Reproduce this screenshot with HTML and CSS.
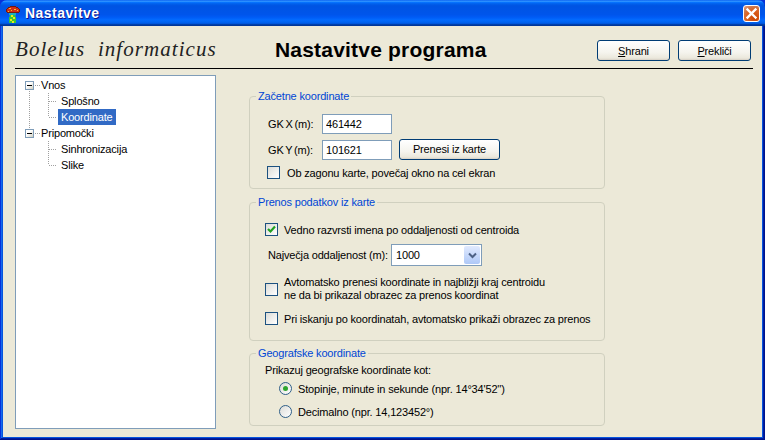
FILE: index.html
```html
<!DOCTYPE html>
<html lang="sl">
<head>
<meta charset="utf-8">
<title>Nastavitve</title>
<link rel="stylesheet" href="styles.css">
</head>
<body>
<div class="window">
  <div class="titlebar">
    <svg class="app-icon" width="15" height="17" viewBox="0 0 15 17" shape-rendering="crispEdges">
      <path fill="#6e1a10" d="M4 0h6v1h2v1h1v1h1v3h-1v1H1V6H0V3h1V2h1V1h2z"/>
      <path fill="#d02c1a" d="M4 1h6v1h2v1h1v3H1V3h1V2h2z"/>
      <path fill="#f4c020" d="M3 2h2v1H3zM8 3h2v1H8zM5 4h1v1H5zM11 4h1v1h-1zM2 5h1v1H2z"/>
      <path fill="#18b0c0" d="M3 7h7v2H3z"/>
      <path fill="#38c838" d="M3 9h7v8H3z"/>
      <path fill="#e8e820" d="M5 9h2v2H5zM7 11h2v2H7zM4 13h2v2H4zM6 15h2v2H6z"/>
      <path fill="#1c7ac8" d="M3 9h1v2H3zM9 9h1v2H9z"/>
    </svg>
    <span class="title-text">Nastavitve</span>
    <button class="close-btn" type="button" aria-label="Zapri">
      <svg width="17" height="17" viewBox="0 0 17 17">
        <path d="M4.5 4.5l8 8M12.5 4.5l-8 8" stroke="#fff" stroke-width="2.4" stroke-linecap="square" fill="none"/>
      </svg>
    </button>
  </div>
  <div class="client">
    <header class="head">
      <div class="brand">Bolelus&nbsp; informaticus</div>
      <h1 class="heading">Nastavitve programa</h1>
      <div class="actions">
        <button class="btn btn-wide" type="button"><u>S</u>hrani</button>
        <button class="btn btn-wide" type="button"><u>P</u>rekliči</button>
      </div>
    </header>
    <main class="body">
      <nav class="tree">
        <svg class="tree-lines" width="60" height="110" viewBox="0 0 60 110">
          <g stroke="#a0a0a0" stroke-width="1" stroke-dasharray="1 1" fill="none" shape-rendering="crispEdges">
            <path d="M13.5 15V52"/>
            <path d="M32.5 17V41M32.5 65V89"/>
            <path d="M19 9.5h5M19 57.5h5"/>
            <path d="M33 25.5h7M33 41.5h7M33 73.5h7M33 89.5h7"/>
          </g>
        </svg>
        <div class="node"><span class="expander"></span><span class="label">Vnos</span></div>
        <div class="node child"><span class="label">Splošno</span></div>
        <div class="node child"><span class="label selected">Koordinate</span></div>
        <div class="node"><span class="expander"></span><span class="label">Pripomočki</span></div>
        <div class="node child"><span class="label">Sinhronizacija</span></div>
        <div class="node child"><span class="label">Slike</span></div>
      </nav>
      <section class="panel">
        <fieldset class="group group-start">
          <legend>Začetne koordinate</legend>
          <div class="coord-row">
            <label class="coord-label">GK X (m):</label>
            <input class="field" type="text" value="461442">
          </div>
          <div class="coord-row coord-row-2">
            <label class="coord-label">GK Y (m):</label>
            <input class="field" type="text" value="101621">
            <button class="btn btn-import" type="button">Prenesi iz karte</button>
          </div>
          <div class="check-row check-start"><span class="check"></span><span>Ob zagonu karte, povečaj okno na cel ekran</span></div>
        </fieldset>
        <fieldset class="group group-transfer">
          <legend>Prenos podatkov iz karte</legend>
          <div class="check-row">
            <span class="check">
              <svg width="11" height="11" viewBox="0 0 11 11"><path d="M2 5l2.5 2.5L9 2.5" stroke="#21a121" stroke-width="2.2" fill="none"/></svg>
            </span>
            <span>Vedno razvrsti imena po oddaljenosti od centroida</span>
          </div>
          <div class="distance-row">
            <label class="distance-label">Največja oddaljenost (m):</label>
            <div class="select">
              <span class="select-value">1000</span>
              <span class="select-arrow">
                <svg width="9" height="7" viewBox="0 0 9 7"><path d="M1 1.5l3.5 3.5L8 1.5" stroke="#4d6185" stroke-width="2" fill="none"/></svg>
              </span>
            </div>
          </div>
          <div class="check-row check-auto"><span class="check"></span><span class="two-line">Avtomatsko prenesi koordinate in najbližji kraj centroidu<br>ne da bi prikazal obrazec za prenos koordinat</span></div>
          <div class="check-row check-search"><span class="check"></span><span>Pri iskanju po koordinatah, avtomatsko prikaži obrazec za prenos</span></div>
        </fieldset>
        <fieldset class="group group-geo">
          <legend>Geografske koordinate</legend>
          <div class="geo-intro">Prikazuj geografske koordinate kot:</div>
          <div class="radio-row"><span class="radio radio-on"></span><span>Stopinje, minute in sekunde (npr. 14°34'52'')</span></div>
          <div class="radio-row radio-row-2"><span class="radio"></span><span>Decimalno (npr. 14,123452°)</span></div>
        </fieldset>
      </section>
    </main>
  </div>
</div>
</body>
</html>
```

FILE: styles.css
```css
* { box-sizing: border-box; }

html, body {
  margin: 0;
  padding: 0;
  width: 765px;
  height: 440px;
  overflow: hidden;
  background: #0831d9;
}

body, button, input {
  font-family: "Liberation Sans", Arial, sans-serif;
  font-size: 11px;
  letter-spacing: -0.17px;
  color: #000;
}

.window {
  width: 765px;
  height: 440px;
  display: flex;
  flex-direction: column;
  padding: 0 3px 3px;
  border-radius: 8px 8px 0 0;
  background: #0855dd;
  box-shadow: inset -1px -1px #00138c, inset 1px 1px #0831d9, inset -2px -2px #001ea0, inset 2px 2px #166aee;
}

.titlebar {
  height: 26px;
  margin: 0 -3px;
  padding: 0 5px 0 6px;
  display: flex;
  align-items: center;
  border-radius: 7px 7px 0 0;
  background: linear-gradient(180deg, #0058ee 0%, #3593ff 4%, #288eff 6%, #127dff 8%, #036ffc 10%, #0262ee 14%, #0057e5 20%, #0054e3 24%, #0055eb 56%, #005bf5 66%, #026afe 76%, #0062ef 86%, #0052d6 92%, #0040ab 94%, #003092 100%);
}

.app-icon { flex: none; margin-top: 2px; }

.title-text {
  margin-left: 4px;
  color: #fff;
  font-size: 14px;
  font-weight: 700;
  letter-spacing: 0.45px;
  text-shadow: 1px 1px #0f1089;
}

.close-btn {
  margin: 1px 0 0 auto;
  width: 17px;
  height: 17px;
  padding: 0;
  display: block;
  border: 1px solid #fff;
  border-radius: 3px;
  background: radial-gradient(circle at 70% 80%, #cc4600 0%, #dc6527 55%, #cd7546 70%, #e5a18a 100%);
}
.close-btn svg { display: block; margin: -1px; }

.client {
  flex: 1;
  min-height: 0;
  display: flex;
  flex-direction: column;
  background: #ece9d8;
}

.head {
  height: 43px;
  margin: 0 9px 0 12px;
  padding: 0 2px 0 0;
  display: flex;
  align-items: center;
  border-bottom: 1px solid #000;
}

.brand {
  width: 260px;
  margin-top: 4px;
  font-family: "Liberation Serif", serif;
  font-style: italic;
  font-size: 21px;
  letter-spacing: 1.05px;
  color: #222;
  white-space: nowrap;
}

.heading {
  margin: 6px 0 0;
  font-size: 21px;
  font-weight: 700;
  letter-spacing: 0.2px;
  white-space: nowrap;
}

.actions {
  margin-left: auto;
  margin-top: 7px;
  display: flex;
  gap: 8px;
}

.btn {
  padding: 0;
  border: 1px solid #003c74;
  border-radius: 3px;
  background: linear-gradient(180deg, #fff 0%, #f5f4ee 60%, #ebe8dc 90%, #d6d0c5 100%);
  white-space: nowrap;
}

.btn-wide { width: 73px; height: 21px; }
.btn-import { width: 101px; height: 21px; margin: -2px 0 0 7px; }

.body {
  flex: 1;
  min-height: 0;
  display: flex;
  padding: 6px 0 0 12px;
}

.tree {
  position: relative;
  flex: none;
  width: 201px;
  height: 354px;
  padding: 1px 0 0 9px;
  background: #fff;
  border: 1px solid #7f9db9;
}

.tree-lines { position: absolute; left: 0; top: 0; }

.node {
  position: relative;
  height: 16px;
  display: flex;
  align-items: center;
}
.node.child { padding-left: 33px; }

.expander {
  position: relative;
  flex: none;
  width: 9px;
  height: 9px;
  margin: 1px 4px 0 0;
  border: 1px solid #7f9db9;
  background: linear-gradient(135deg, #fff 40%, #d0cfc0 100%);
}
.expander::after {
  content: "";
  position: absolute;
  left: 1px;
  top: 3px;
  width: 5px;
  height: 1px;
  background: #000;
}

.label { padding: 0 3px; line-height: 16px; white-space: nowrap; }
.label.selected { background: #316ac5; color: #fff; }

.panel {
  flex: none;
  width: 356px;
  margin-left: 33px;
  padding-top: 15px;
  display: flex;
  flex-direction: column;
}

.group {
  margin: 0;
  padding: 0;
  border: 1px solid #d0d0bf;
  border-radius: 4px;
  min-width: 0;
}

.group legend {
  padding: 0 2px;
  color: #0046d5;
  line-height: 13px;
}

.group-start { height: 99px; padding: 11px 0 0 18px; }
.group-start legend { margin-left: -12px; }
.group-transfer { height: 145px; margin-top: 7px; padding: 14px 0 0 15px; }
.group-transfer legend { margin-left: -9px; }
.group-geo { height: 79px; margin-top: 6px; padding: 3px 0 0 15px; }
.group-geo legend { margin-left: -9px; }

.coord-row { display: flex; align-items: center; height: 20px; }
.coord-row-2 { margin-top: 6px; }
.coord-label { width: 54px; word-spacing: -1px; }

.field {
  width: 70px;
  height: 20px;
  padding: 0 2px 0 3px;
  border: 1px solid #7f9db9;
  background: #fff;
}

.check-row { display: flex; align-items: center; }
.check-start { margin: 6px 0 0 -1px; height: 13px; }
.check-auto { margin-top: 10px; }
.check-search { margin-top: 10px; }

.check {
  flex: none;
  width: 13px;
  height: 13px;
  margin-right: 6px;
  display: block;
  border: 1px solid #1c5180;
  background: linear-gradient(135deg, #dcdcd7 0%, #fff 100%);
}
.check svg { display: block; }

.check-start .check { margin-right: 7px; }

.two-line { line-height: 13px; }

.distance-row {
  display: flex;
  align-items: center;
  margin: 8px 0 0 3px;
  height: 22px;
}

.distance-label { width: 123px; white-space: nowrap; }

.select {
  width: 91px;
  height: 22px;
  padding: 1px;
  display: flex;
  align-items: center;
  border: 1px solid #7f9db9;
  background: #fff;
}

.select-value { flex: 1; padding-left: 3px; }

.select-arrow {
  width: 16px;
  height: 18px;
  display: flex;
  align-items: center;
  justify-content: center;
  border-radius: 2px;
  background: linear-gradient(180deg, #e1eafe 0%, #aec8f7 100%);
}
.select-arrow svg { display: block; }

.geo-intro { line-height: 14px; }

.radio-row { display: flex; align-items: center; margin: 5px 0 0 14px; height: 13px; }
.radio-row-2 { margin-top: 10px; }

.radio {
  position: relative;
  flex: none;
  width: 13px;
  height: 13px;
  margin-right: 6px;
  border: 1px solid #2f5f88;
  border-radius: 50%;
  background: linear-gradient(135deg, #dcdcd7 0%, #fff 100%);
}
.radio-on::after {
  content: "";
  position: absolute;
  left: 3px;
  top: 3px;
  width: 5px;
  height: 5px;
  border-radius: 50%;
  background: #2fa52f;
}
```
